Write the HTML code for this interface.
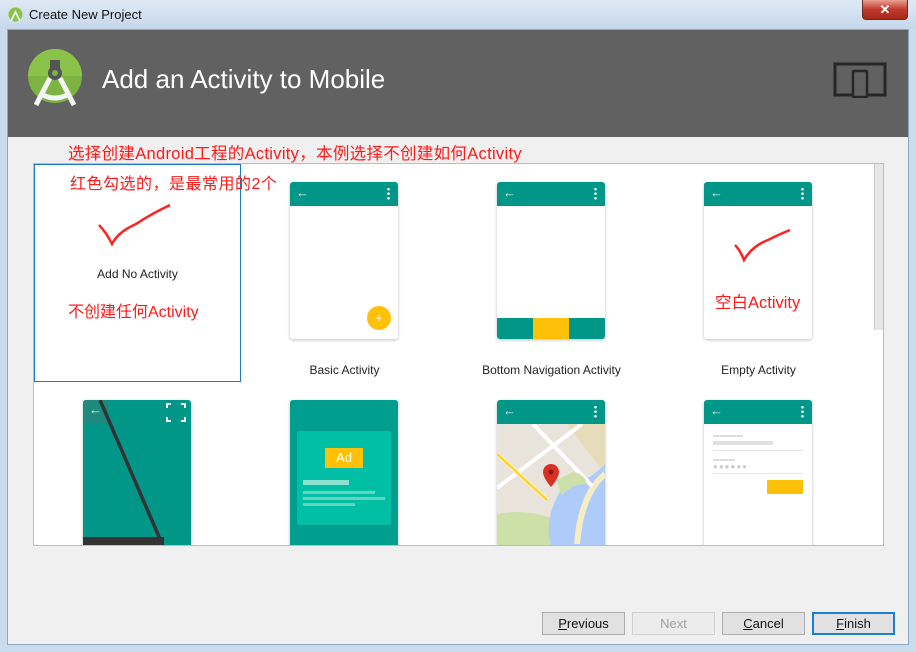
<!DOCTYPE html>
<html><head><meta charset="utf-8"><style>
*{margin:0;padding:0;box-sizing:border-box}
body{width:916px;height:652px;overflow:hidden;position:relative;background:#c9dcee;font-family:"Liberation Sans","Noto Sans CJK SC",sans-serif}
.abs{position:absolute}
.title{left:0;top:0;width:916px;height:29px;background:linear-gradient(#dfe9f5,#c5d8ec)}
.title span{position:absolute;left:29px;top:7px;font-size:13px;color:#111}
.close{left:862px;top:0;width:46px;height:20px;background:linear-gradient(#e8a090,#c0392b 50%,#a52a1a);border:1px solid #6b2a20;border-top:none;border-radius:0 0 4px 4px;color:#fff;font-weight:bold;text-align:center;font-size:13px;line-height:19px}
.frame{left:7px;top:29px;width:902px;height:616px;background:#f0f0f0;border:1px solid #8ea6c0}
.head{left:8px;top:30px;width:900px;height:107px;background:#616161}
.h1{left:102px;top:64px;font-size:26px;color:#fff}
.grid{left:33px;top:163px;width:851px;height:383px;background:#fff;border:1px solid #bdbdbd;overflow:hidden}
.card{position:absolute;width:108px;height:157px;background:#fff;border-radius:3px;box-shadow:0 1px 3px rgba(0,0,0,.25);overflow:hidden}
.bar{height:24px;background:#009688;position:relative;color:#e0f2f1;font-size:13px}
.bar .ar{position:absolute;left:6px;top:3px}
.bar .dt{position:absolute;right:8px;top:5px;width:3px;height:13px;background:radial-gradient(circle,#fff 1.2px,transparent 1.4px) 0 0/3px 4.5px}
.lbl{position:absolute;font-size:12px;color:#222;text-align:center;width:207px}
.red{color:#ff1a1a;font-size:16px;position:absolute;white-space:nowrap}
.btn{position:absolute;top:612px;width:83px;height:23px;border:1px solid #adadad;background:#e1e1e1;font-size:13px;text-align:center;line-height:21px;color:#111}
</style></head><body>
<div class="abs title"><svg class="abs" style="left:8px;top:7px" width="15" height="15"><circle cx="7.5" cy="7.5" r="7" fill="#8bc34a"/><path d="M3 14L7.5 5L12 14" stroke="#fff" stroke-width="1.6" fill="none"/></svg><span>Create New Project</span></div>
<div class="abs close">✕</div>
<div class="abs frame"></div>
<div class="abs head"></div>
<svg class="abs" style="left:28px;top:48px" width="56" height="62" viewBox="0 0 56 62">
<circle cx="27" cy="28" r="27" fill="#7cb342"/><path d="M0 28a27 27 0 0 1 54 0z" fill="#8bc34a"/>
<path d="M8 57L22 30M46 57L32 30M13 46Q27 54 41 46" stroke="#f5f5f5" stroke-width="5" fill="none"/>
<rect x="22" y="12" width="10" height="8" fill="#555"/><circle cx="27" cy="25" r="7" fill="#555"/><circle cx="27" cy="25" r="3" fill="#7cb342"/></svg>
<div class="abs h1">Add an Activity to Mobile</div>
<svg class="abs" style="left:833px;top:62px" width="54" height="36"><rect x="2" y="2" width="50" height="31" fill="none" stroke="#262626" stroke-width="3"/><rect x="20" y="9" width="14" height="26" rx="1" fill="#616161" stroke="#262626" stroke-width="2.5"/></svg>
<div class="red" style="left:68px;top:140px;font-size:16.5px;letter-spacing:.3px">选择创建Android工程的Activity，本例选择不创建如何Activity</div>
<div class="abs grid">
 <div class="abs" style="left:0;top:0;width:207px;height:218px;border:1px solid #1e78c8"></div>
 <div class="abs" style="left:840px;top:0;width:10px;height:166px;background:#e6e6e6;border-left:1px solid #ccc"></div>
 <div class="lbl" style="left:0;top:103px">Add No Activity</div>
 <svg class="abs" style="left:62px;top:38px" width="80" height="50"><path d="M3 23Q10 30 16 42Q22 30 40 22Q55 12 74 3" stroke="#f22" stroke-width="2.5" fill="none"/></svg>
 <div class="card" style="left:256px;top:18px"><div class="bar"><span class="ar">←</span><span class="dt"></span></div><div style="position:absolute;left:77px;top:124px;width:24px;height:24px;border-radius:50%;background:#ffc107;color:#fff;text-align:center;font-size:12px;line-height:24px">+</div></div>
 <div class="lbl" style="left:207px;top:199px">Basic Activity</div>
 <div class="card" style="left:463px;top:18px"><div class="bar"><span class="ar">←</span><span class="dt"></span></div><div style="position:absolute;left:0;bottom:0;width:108px;height:21px;background:#009688"><div style="margin-left:36px;width:36px;height:21px;background:#ffc107"></div></div></div>
 <div class="lbl" style="left:414px;top:199px">Bottom Navigation Activity</div>
 <div class="card" style="left:670px;top:18px"><div class="bar"><span class="ar">←</span><span class="dt"></span></div>
 <svg class="abs" style="left:28px;top:42px" width="64" height="44"><path d="M3 21Q8 26 12 36Q20 22 36 16Q48 10 58 6" stroke="#f22" stroke-width="2.5" fill="none"/></svg></div>
 <div class="lbl" style="left:621px;top:199px">Empty Activity</div>
 <div class="card" style="left:49px;top:236px;background:#009688;height:160px"><div style="width:24px;height:24px;background:#1e8a7e;color:#e0f2f1;font-size:13px;padding:2px 6px">←</div>
 <svg class="abs" style="left:0;top:0" width="108" height="160"><path d="M17 0L80 146" stroke="#333" stroke-width="3.5"/><rect x="0" y="137" width="81" height="20" fill="#333"/><path d="M84 8v-4h4M98 4h4v4M84 17v4h4M98 21h4v-4" stroke="#fff" stroke-width="2" fill="none"/></svg></div>
 <div class="card" style="left:256px;top:236px;background:#009e8e;height:160px"><div style="position:absolute;left:7px;top:31px;width:94px;height:94px;background:#00bfa5;border-radius:2px"><div style="position:absolute;left:28px;top:17px;width:38px;height:20px;background:#ffc107;color:#fff;font-size:13px;text-align:center;line-height:20px">Ad</div><div style="position:absolute;left:6px;top:49px;width:46px;height:5px;background:#8ee0d2"></div><div style="position:absolute;left:6px;top:60px;width:72px;height:3px;background:#66d2c2"></div><div style="position:absolute;left:6px;top:66px;width:82px;height:3px;background:#66d2c2"></div><div style="position:absolute;left:6px;top:72px;width:52px;height:3px;background:#66d2c2"></div></div></div>
 <div class="card" style="left:463px;top:236px;height:160px"><div class="bar"><span class="ar">←</span><span class="dt"></span></div>
 <svg class="abs" style="left:0;top:24px" width="108" height="136"><rect width="108" height="136" fill="#e8e4dc"/><path d="M38 0H108V50L70 0z" fill="#e6dcba"/><path d="M0 90Q30 84 60 96V136H0z" fill="#cde0a8"/><path d="M68 60Q90 60 108 40V136H60Q40 100 68 60z" fill="#aecbfa"/><path d="M80 120Q84 70 108 50" stroke="#f6edc4" stroke-width="6" fill="none"/><path d="M36 0L95 62M0 64L85 0M0 30L50 76" stroke="#fff" stroke-width="4"/><path d="M0 30L50 76" stroke="#fdd835" stroke-width="3"/><path d="M60 56Q64 75 66 70Q75 60 90 60Q88 50 76 48z" fill="#cde0a8"/><path d="M54 40c-5 0-8 4-8 8 0 6 8 15 8 15s8-9 8-15c0-4-3-8-8-8z" fill="#d93025"/><circle cx="54" cy="48" r="2.5" fill="#8a1a12"/></svg></div>
 <div class="card" style="left:670px;top:236px;height:160px"><div class="bar"><span class="ar">←</span><span class="dt"></span></div>
 <div style="position:absolute;left:9px;top:35px;width:30px;height:2px;background:#e0e0e0"></div><div style="position:absolute;left:9px;top:41px;width:60px;height:4px;background:#e0e0e0"></div><div style="position:absolute;left:9px;top:50px;width:90px;height:1px;background:#e6e6e6"></div>
 <div style="position:absolute;left:9px;top:59px;width:22px;height:2px;background:#e0e0e0"></div><div style="position:absolute;left:9px;top:62px;font-size:8px;color:#ccc;letter-spacing:1px">●●●●●●</div><div style="position:absolute;left:9px;top:73px;width:90px;height:1px;background:#e6e6e6"></div>
 <div style="position:absolute;left:63px;top:80px;width:36px;height:14px;background:#ffc107"></div></div>
</div>
<div class="red" style="left:70px;top:170px;letter-spacing:.5px">红色勾选的，是最常用的2个</div>
<div class="red" style="left:68px;top:298px">不创建任何Activity</div>
<div class="red" style="left:715px;top:289px;font-size:16.5px">空白Activity</div>
<div class="btn" style="left:542px"><u>P</u>revious</div>
<div class="btn" style="left:632px;color:#a0a0a0;border-color:#d0d0d0;background:#ececec">Next</div>
<div class="btn" style="left:722px"><u>C</u>ancel</div>
<div class="btn" style="left:812px;border:2px solid #1a7fd8;line-height:19px"><u>F</u>inish</div>
</body></html>
